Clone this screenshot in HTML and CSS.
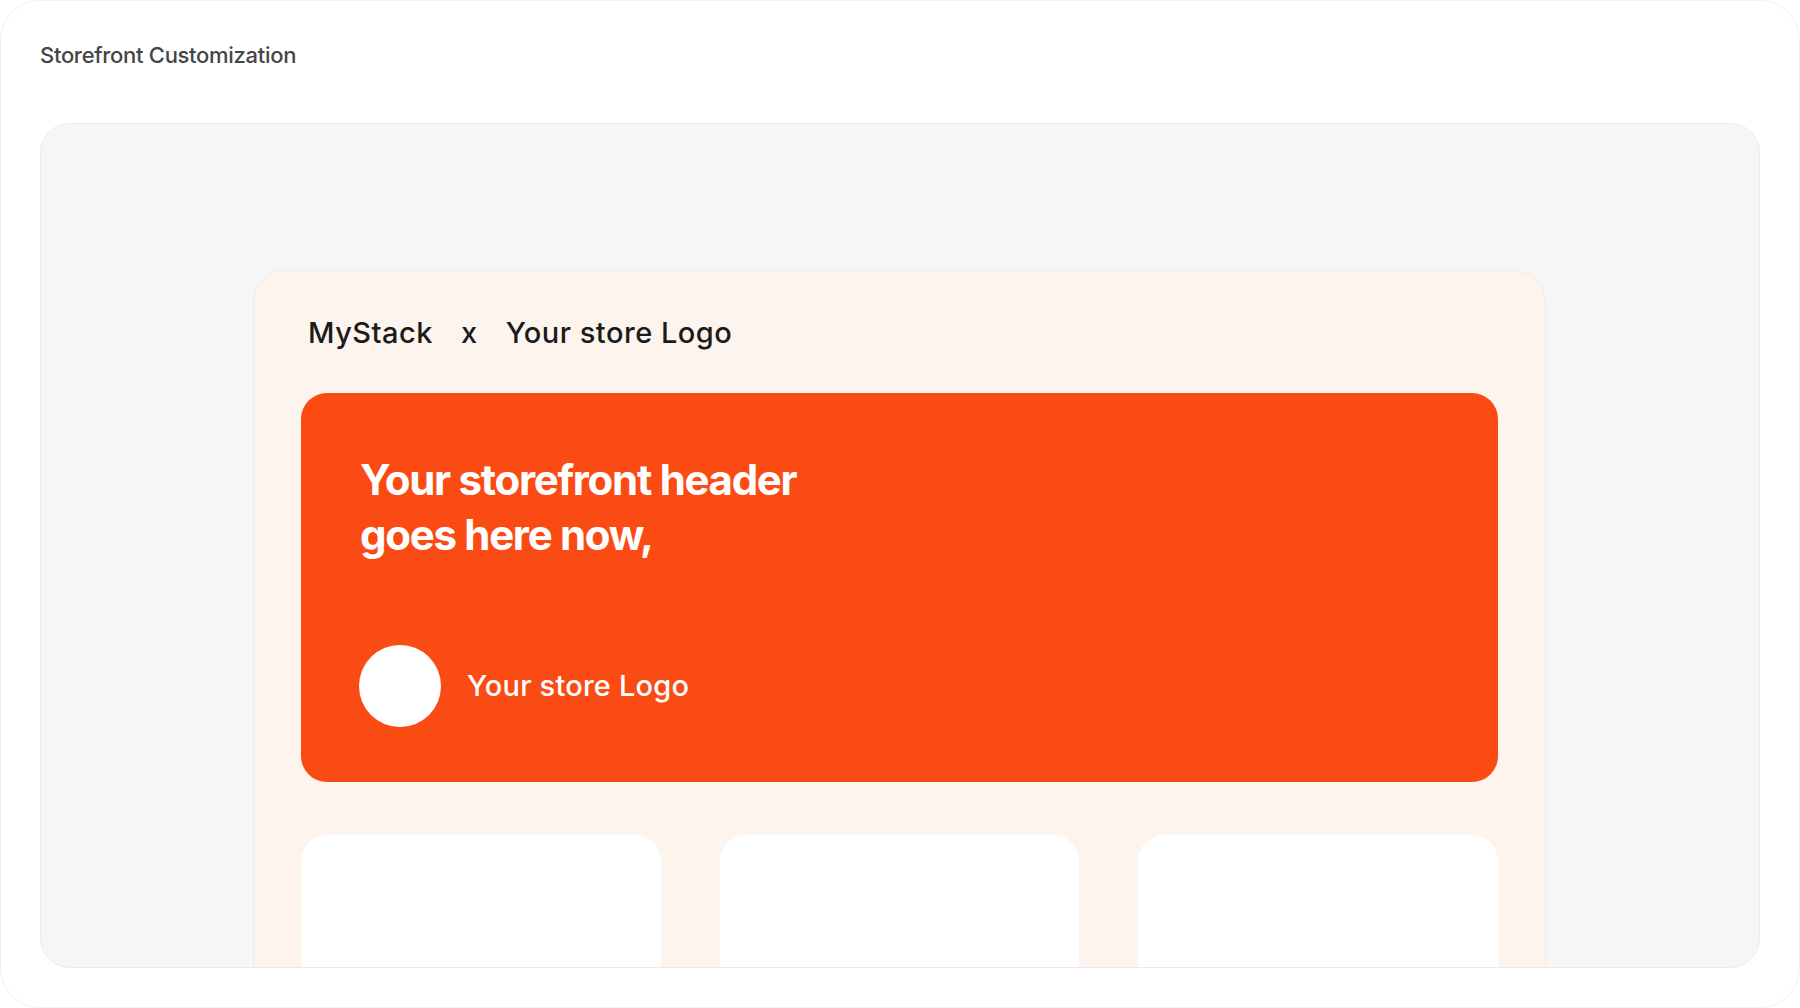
FILE: index.html
```html
<!DOCTYPE html>
<html lang="en">
<head>
<meta charset="utf-8">
<title>Storefront Customization</title>
<link rel="stylesheet" href="styles.css">
</head>
<body>
<div class="frame">
  <h1 class="title">Storefront Customization</h1>
  <section class="panel">
    <div class="store">
      <div class="brandline">
        <span class="brand">MyStack</span>
        <span class="brand">x</span>
        <span class="brand">Your store Logo</span>
      </div>
      <div class="banner">
        <h2 class="headline">Your storefront header<br>goes here now,</h2>
        <div class="logo-row">
          <span class="logo-dot"></span>
          <span class="logo-text">Your store Logo</span>
        </div>
      </div>
      <div class="cards">
        <div class="card"></div>
        <div class="card"></div>
        <div class="card"></div>
      </div>
    </div>
  </section>
</div>
</body>
</html>
```

FILE: styles.css
```css
* { box-sizing: border-box; }
html, body { margin: 0; padding: 0; background: #ffffff; }
body { font-family: Inter, "Noto Sans", sans-serif; }

.frame {
  width: 1800px;
  height: 1008px;
  border: 1px solid #f0f0f0;
  border-radius: 40px;
  padding: 41px 39px 39px 39px;
  display: flex;
  flex-direction: column;
  overflow: hidden;
}

.title {
  margin: 0;
  font-size: 22px;
  line-height: 26px;
  font-weight: 500;
  color: #454545;
  letter-spacing: -0.3px;
}

.panel {
  margin-top: 55px;
  flex: 1;
  background: #f6f6f6;
  border: 1px solid #eaeaea;
  border-radius: 30px;
  padding: 146px 213px 0 212px;
  overflow: hidden;
  min-height: 0;
}

.store {
  background: #fdf4ee;
  border: 1px solid #f1ebe6;
  border-radius: 32px;
  padding: 45px 47px 0 47px;
  height: 760px;
}

.brandline {
  display: flex;
  gap: 28px;
  padding-left: 7px;
  height: 34px;
  align-items: center;
}

.brand {
  font-size: 29px;
  line-height: 34px;
  font-weight: 500;
  color: #1b1b1b;
  letter-spacing: 0.5px;
}

.banner {
  margin-top: 43px;
  height: 389px;
  background: #fb4b14;
  border-radius: 26px;
  padding: 59px 58px 55px 58px;
  display: flex;
  flex-direction: column;
  justify-content: space-between;
}

.headline {
  margin: 0;
  font-size: 42px;
  line-height: 55px;
  font-weight: 700;
  color: #ffffff;
  letter-spacing: -1.3px;
  padding-left: 1px;
}

.logo-row {
  display: flex;
  align-items: center;
  gap: 26px;
}

.logo-dot {
  width: 82px;
  height: 82px;
  border-radius: 50%;
  background: #ffffff;
  flex: none;
}

.logo-text {
  font-size: 29px;
  line-height: 34px;
  font-weight: 500;
  color: #ffffff;
  letter-spacing: 0.2px;
}

.cards {
  margin-top: 53px;
  display: grid;
  grid-template-columns: repeat(3, 1fr);
  gap: 59px;
}

.card {
  height: 260px;
  background: #ffffff;
  border-radius: 26px;
}
```
